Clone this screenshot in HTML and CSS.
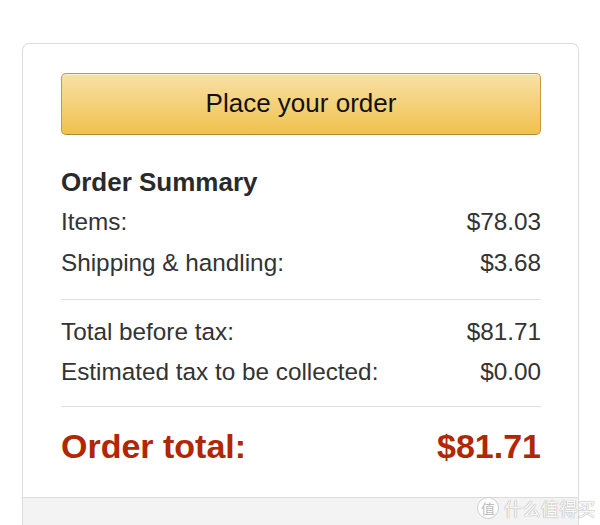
FILE: index.html
```html
<!DOCTYPE html>
<html lang="en">
<head>
<meta charset="utf-8">
<title>Order Summary</title>
<link rel="stylesheet" href="styles.css">
</head>
<body>
<div class="card">
  <div class="card-body">
    <button class="place-btn">Place your order</button>
    <h3 class="summary-title">Order Summary</h3>
    <div class="row"><span>Items:</span><span>$78.03</span></div>
    <div class="row"><span>Shipping &amp; handling:</span><span>$3.68</span></div>
    <hr class="sep">
    <div class="row row-after"><span>Total before tax:</span><span>$81.71</span></div>
    <div class="row"><span>Estimated tax to be collected:</span><span>$0.00</span></div>
    <hr class="sep sep2">
    <div class="row total"><span>Order total:</span><span>$81.71</span></div>
  </div>
  <div class="card-footer"></div>
</div>
<div class="watermark"><span class="wm-circle">值</span><span class="wm-text">什么值得买</span></div>
</body>
</html>
```
FILE: styles.css
```css
html, body {
  margin: 0;
  padding: 0;
  background: #fff;
  overflow: hidden;
}
body {
  font-family: "Liberation Sans", Arial, sans-serif;
  color: #333;
  height: 525px;
}
.card {
  margin: 43px 0 0 22px;
  width: 557px;
  box-sizing: border-box;
  border: 1px solid #dcdcdc;
  border-bottom: none;
  border-radius: 7px 7px 0 0;
  overflow: hidden;
}
.card-body {
  padding: 29px 37px 31px 38px;
}
.place-btn {
  display: block;
  width: 100%;
  height: 62px;
  margin: 0;
  padding: 0 0 2px;
  box-sizing: border-box;
  border: 1px solid #c39a3c;
  border-bottom-color: #b08a32;
  border-radius: 5px;
  background: linear-gradient(to bottom, #f8e0a6, #f0c24d);
  box-shadow: inset 0 1px 0 rgba(255,255,255,0.5);
  font-family: "Liberation Sans", Arial, sans-serif;
  font-size: 26px;
  color: #111;
  text-align: center;
}
.summary-title {
  margin: 32px 0 5px;
  font-size: 26px;
  line-height: 30px;
  font-weight: bold;
  color: #2a2a2a;
}
.row {
  display: flex;
  justify-content: space-between;
  font-size: 24.3px;
  line-height: 40.5px;
  color: #333;
}
.sep {
  margin: 15.5px 0 12px;
  border: 0;
  border-top: 1px solid #e0e0e0;
  height: 0;
}
.sep2 {
  margin: 13.5px 0 19px;
}
.total {
  font-size: 34px;
  line-height: 40px;
  font-weight: bold;
  color: #b12704;
}
.card-footer {
  border-top: 1px solid #dcdcdc;
  background: #f3f3f3;
  height: 40px;
}
.watermark {
  position: absolute;
  left: 477px;
  top: 497px;
  display: flex;
  align-items: center;
  gap: 5px;
  font-family: "Noto Sans CJK SC", sans-serif;
  color: #fafafa;
  text-shadow: 0 0 1px #a8a8a8, 0 0 1px #a8a8a8;
}
.wm-circle {
  width: 20px;
  height: 20px;
  border-radius: 50%;
  border: 1.5px solid #cfcfcf;
  background: #fff;
  color: #bdbdbd;
  text-shadow: none;
  font-size: 14px;
  line-height: 20px;
  text-align: center;
  box-sizing: content-box;
}
.wm-text {
  font-size: 18px;
  line-height: 20px;
  letter-spacing: 0.4px;
}
```
